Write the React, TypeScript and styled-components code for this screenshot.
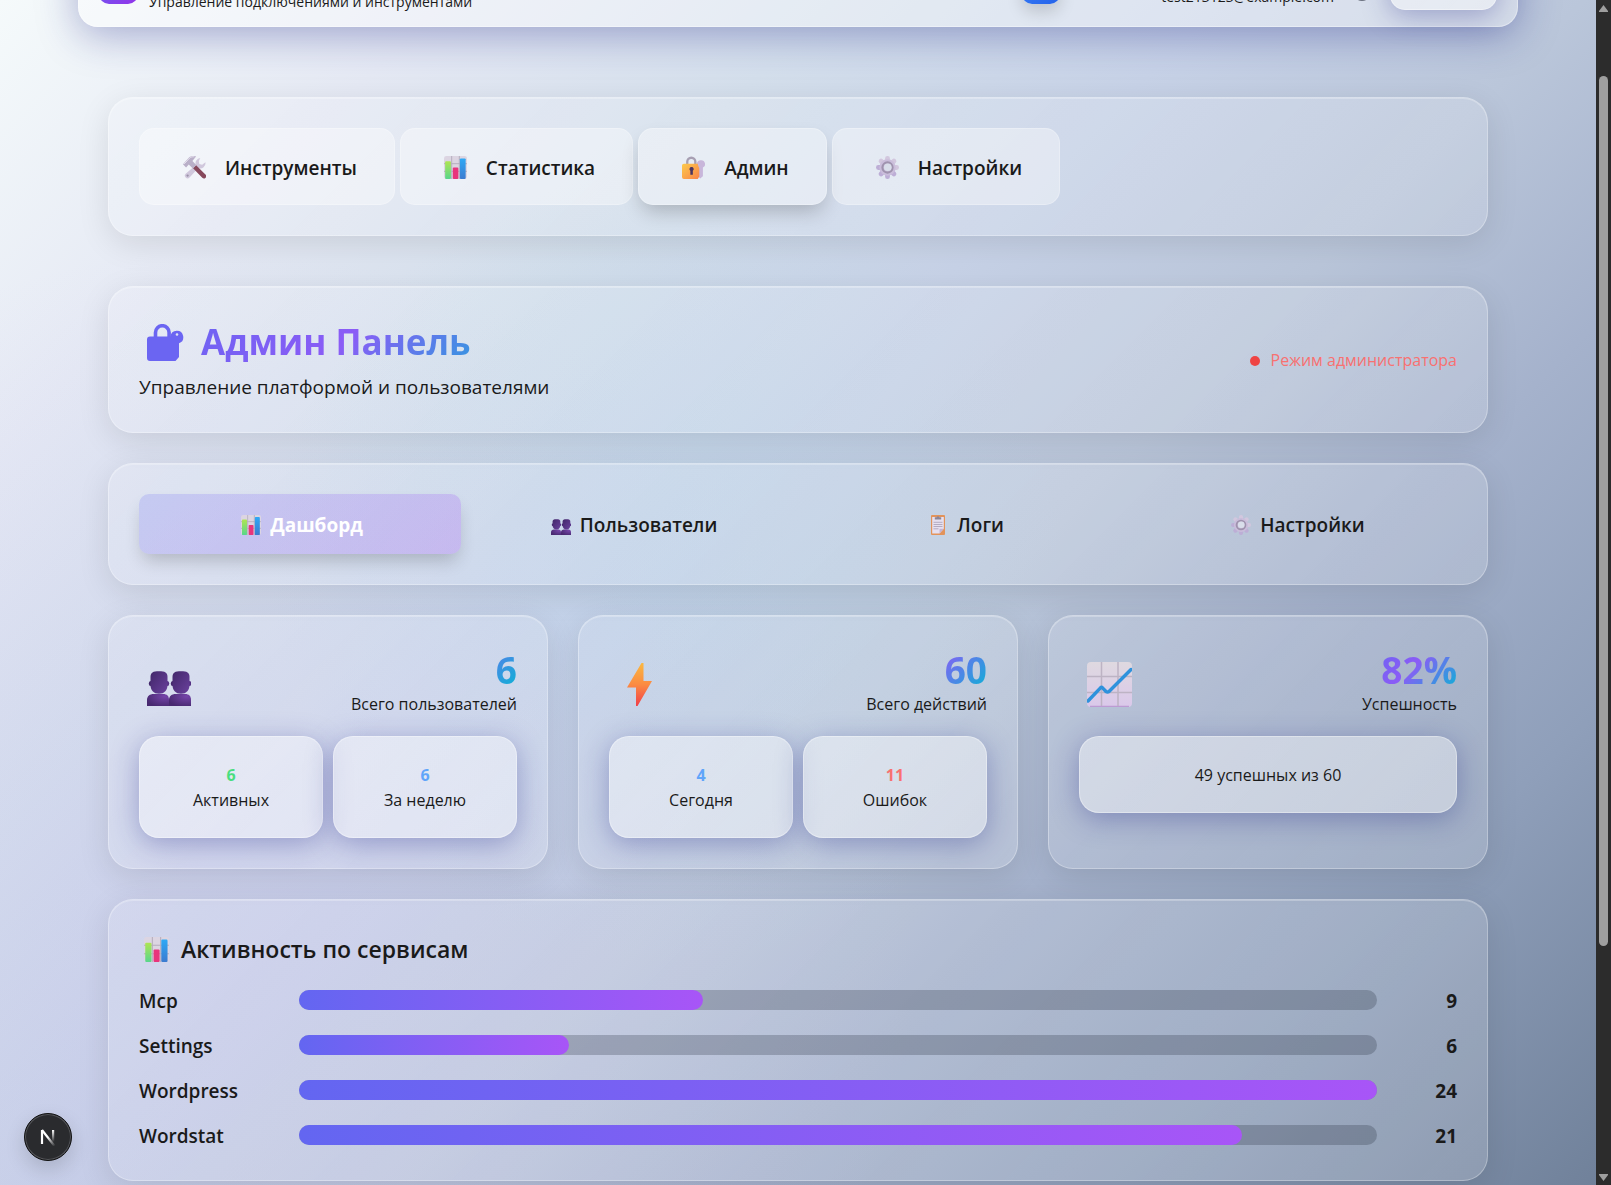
import React from "react";
import styled, { createGlobalStyle, css } from "styled-components";

const GlobalStyle = createGlobalStyle`
  *, *::before, *::after { box-sizing: border-box; }
  body {
    margin: 0;
    overflow: hidden;
    color: #1a1a1a;
    font-family: "Open Sans", "Noto Sans", sans-serif;
    font-size: 19px;
  }
  h1, h2, p { margin: 0; }
  button { font: inherit; color: inherit; cursor: pointer; }
`;

const brandText = css`
  background: linear-gradient(135deg, #6366f1 0%, #8b5cf6 50%, #06b6d4 100%);
  -webkit-background-clip: text;
  background-clip: text;
  color: transparent;
`;

const raised = css`
  border: 1px solid rgba(255, 255, 255, 0.35);
  background: linear-gradient(135deg, rgba(255, 255, 255, 0.4), rgba(255, 255, 255, 0.38));
  box-shadow: 0 6px 28px rgba(31, 38, 135, 0.34);
`;

const Screen = styled.div`
  display: flex;
  height: 100vh;
`;

const Page = styled.div`
  flex: 1;
  min-width: 0;
  overflow: hidden;
  background:
    radial-gradient(circle at 14% 80%, rgba(200, 190, 240, 0.3), rgba(200, 190, 240, 0) 42%),
    radial-gradient(circle at 42% 48%, rgba(180, 212, 232, 0.4), rgba(180, 212, 232, 0) 36%),
    linear-gradient(
      135deg,
      #f5fafb 0%,
      #e5e9f4 16%,
      #d4dfec 30%,
      #c7d2e7 44%,
      #bac6da 57%,
      #a5b2cc 69%,
      #8f9fba 83%,
      #70819a 100%
    );
`;

const Header = styled.header`
  display: flex;
  align-items: center;
  gap: 11px;
  max-width: 1440px;
  height: 86px;
  margin: -59px auto 70px;
  padding: 0 20px;
  border: 1px solid rgba(255, 255, 255, 0.35);
  border-radius: 20px;
  background: rgba(255, 255, 255, 0.38);
  box-shadow: 0 8px 40px rgba(31, 38, 135, 0.36);
`;

const Logo = styled.div`
  width: 39px;
  height: 40px;
  border-radius: 10px;
  background: linear-gradient(135deg, #6366f1, #9333ea);
`;

const HeaderText = styled.div<{ $height: number; $width?: number }>`
  display: flex;
  flex-direction: column;
  justify-content: flex-end;
  align-items: ${(p) => (p.$width ? "flex-end" : "flex-start")};
  height: ${(p) => p.$height}px;
  width: ${(p) => (p.$width ? `${p.$width}px` : "auto")};
  font-size: 14px;
  line-height: 20px;
`;

const HeaderActions = styled.div`
  display: flex;
  align-items: center;
  margin-left: auto;
`;

const BlueButton = styled.button`
  width: 38px;
  height: 40px;
  border: 0;
  border-radius: 10px;
  background: linear-gradient(135deg, #3b82f6, #2563eb);
  box-shadow: 0 8px 16px rgba(0, 0, 0, 0.15);
`;

const StatusRing = styled.span`
  width: 18px;
  height: 34px;
  margin: 0 19px 0 19px;
  border-radius: 9px;
  background: #6b7280;
`;

const GhostButton = styled.button`
  width: 107px;
  height: 52px;
  border-radius: 15px;
  ${raised}
`;

const Main = styled.main`
  display: flex;
  flex-direction: column;
  gap: 30px;
  max-width: 1380px;
  margin: 0 auto;
`;

const Panel = styled.section`
  padding: 30px;
  border: 1px solid rgba(255, 255, 255, 0.3);
  border-radius: 25px;
  background: linear-gradient(135deg, rgba(255, 255, 255, 0.12), rgba(255, 255, 255, 0.17));
  box-shadow: 0 8px 32px rgba(0, 0, 0, 0.1), inset 0 1px 0 rgba(255, 255, 255, 0.25);
`;

const MainNav = styled(Panel).attrs({ as: "nav" })`
  display: flex;
  gap: 5px;
  margin-bottom: 20px;
`;

const NavButton = styled.button<{ $active?: boolean }>`
  display: flex;
  align-items: center;
  gap: 19px;
  height: 77px;
  padding: 2px 37px 0 43px;
  border: 1px solid rgba(255, 255, 255, 0.25);
  border-radius: 15px;
  background: rgba(255, 255, 255, 0.38);
  font-weight: 600;
  box-shadow: ${(p) => (p.$active ? "0 10px 20px -4px rgba(0, 0, 0, 0.22)" : "none")};
`;

const TitlePanel = styled(Panel)`
  display: flex;
  justify-content: space-between;
  align-items: center;
`;

const Title = styled.h1`
  display: flex;
  align-items: center;
  gap: 17px;
  padding-left: 8px;
  margin-bottom: 6px;
  font-size: 35px;
  line-height: 50px;
  font-weight: 700;
  ${brandText}
`;

const Subtitle = styled.p`
  line-height: 29px;
`;

const Mode = styled.div`
  display: flex;
  align-items: center;
  gap: 11px;
  padding-top: 2px;
  color: #f87171;
  font-size: 16px;
  line-height: 25px;
`;

const Dot = styled.span`
  width: 10px;
  height: 10px;
  border-radius: 50%;
  background: #ef4444;
`;

const Tabs = styled(Panel).attrs({ as: "nav" })`
  display: grid;
  grid-template-columns: repeat(4, 1fr);
  gap: 10px;
`;

const Tab = styled.button<{ $active?: boolean }>`
  display: flex;
  align-items: center;
  justify-content: center;
  gap: 9px;
  height: 60px;
  padding: 2px 0 0 4px;
  border: 0;
  border-radius: 10px;
  background: ${(p) =>
    p.$active ? "linear-gradient(135deg, rgba(99, 102, 241, 0.2), rgba(168, 85, 247, 0.25))" : "transparent"};
  color: ${(p) => (p.$active ? "#fff" : "inherit")};
  font-weight: ${(p) => (p.$active ? 700 : 600)};
  box-shadow: ${(p) => (p.$active ? "0 10px 18px -4px rgba(0, 0, 0, 0.2)" : "none")};
`;

const Cards = styled.div`
  display: grid;
  grid-template-columns: repeat(3, 1fr);
  gap: 30px;
`;

const CardHead = styled.div`
  display: flex;
  justify-content: space-between;
  align-items: center;
  height: 70px;
  margin-bottom: 20px;
  padding: 2px 0 0 8px;
`;

const CardIcon = styled.div`
  display: grid;
  padding-top: 4px;
`;

const Figure = styled.div`
  text-align: right;
`;

const Big = styled.p`
  font-size: 37px;
  line-height: 45px;
  font-weight: 700;
  ${brandText}
`;

const Caption = styled.p`
  font-size: 16px;
  line-height: 25px;
`;

const Minis = styled.div`
  display: flex;
  gap: 10px;
`;

const Mini = styled.div`
  flex: 1;
  padding: 26px 25px 24px;
  border-radius: 20px;
  text-align: center;
  font-size: 16px;
  line-height: 25px;
  ${raised}
`;

const MiniValue = styled.p<{ $color: string }>`
  color: ${(p) => p.$color};
  font-weight: 700;
`;

const SectionTitle = styled.h2`
  display: flex;
  align-items: center;
  gap: 12px;
  margin-bottom: 17px;
  padding-left: 5px;
  font-size: 23px;
  line-height: 38px;
  font-weight: 600;
`;

const Rows = styled.div`
  display: flex;
  flex-direction: column;
  gap: 15px;
`;

const Row = styled.div`
  display: grid;
  grid-template-columns: 160px 1fr 80px;
  align-items: start;
  height: 30px;
  line-height: 32px;
  font-weight: 600;
`;

const Track = styled.div`
  height: 20px;
  margin-top: 5px;
  border-radius: 10px;
  background: rgba(31, 41, 55, 0.25);
`;

const Fill = styled.div`
  height: 100%;
  border-radius: 10px;
  background: linear-gradient(90deg, #6366f1, #a855f7);
`;

const Count = styled.span`
  text-align: right;
  font-weight: 700;
`;

const Scrollbar = styled.div`
  display: flex;
  flex-direction: column;
  align-items: center;
  width: 15px;
  padding: 5px 0 4px;
  background: #2c2c2c;
`;

const Arrow = styled.svg`
  width: 9px;
  height: 7px;
  fill: #9f9f9f;
`;

const ThumbLane = styled.div`
  display: flex;
  flex: 1;
  flex-direction: column;
  padding: 64px 0 228px;
`;

const Thumb = styled.div`
  flex: 1;
  width: 9px;
  border-radius: 5px;
  background: #9f9f9f;
`;

const DevBadge = styled.button`
  position: fixed;
  left: 24px;
  bottom: 24px;
  display: grid;
  place-items: center;
  width: 48px;
  height: 48px;
  padding: 0;
  border: 1px solid #111;
  border-radius: 50%;
  background: #2a2b2e;
  box-shadow: inset 0 0 0 1px #55565a, 0 8px 20px rgba(0, 0, 0, 0.15);
`;

type IconProps = { size: number };

const Tools = ({ size }: IconProps) => (
  <svg width={size} height={size} viewBox="0 0 24 24" aria-hidden="true">
    <path d="M18 2a5.500 5.500 0 0 0-4.600 7.400L2.800 18.400a2.800 2.800 0 1 0 4 4L16 12.600a5.500 5.500 0 0 0 7.400-6.100l-3.400 2.600-3-.8-.5-3z" fill="#d0c7dc" />
    <path d="M10.500 12.800l3.200-3.200 9.700 9.600a2.300 2.300 0 0 1-3.300 3.600z" fill="#87485c" />
    <path d="M0 8.700L5.800 2C8 .2 10.800-.4 13.600.6L9.800 5.200l4 4.300-3.500 3.600L6 8.900 3.200 12z" fill="#b9afc8" />
    <path d="M1.200 8.300l5.500-6C8.300.9 10 .6 12 .9" stroke="#e9e4f0" strokeWidth="1" fill="none" />
    <circle cx="4.800" cy="20.400" r="1.200" fill="#9990a8" />
  </svg>
);

const BarChart = ({ size }: IconProps) => (
  <svg width={size} height={size} viewBox="0 0 24 24" aria-hidden="true">
    <defs>
      <linearGradient id="barGreen" x2="0" y2="1"><stop stopColor="#aee552" /><stop offset="1" stopColor="#58d68c" /></linearGradient>
      <linearGradient id="barBlue" x2="0" y2="1"><stop stopColor="#2fa9f5" /><stop offset="1" stopColor="#3b7bd0" /></linearGradient>
    </defs>
    <rect width="24" height="24" rx="2.500" fill="#dcd5e2" />
    <path d="M0 8h24M0 16h24M8 0v24M16 0v24" stroke="#b5adbd" strokeWidth="1" />
    <rect x="1.200" y="5.500" width="6" height="18.500" rx="1" fill="url(#barGreen)" />
    <rect x="9.200" y="12" width="5.800" height="12" rx="1" fill="#e8357c" />
    <rect x="16.600" y="2.500" width="6" height="21.500" rx="1" fill="url(#barBlue)" />
  </svg>
);

const LockKey = ({ size }: IconProps) => (
  <svg width={size} height={size} viewBox="0 0 24 24" aria-hidden="true">
    <defs>
      <linearGradient id="lockBody" x2="1" y2="1"><stop stopColor="#fccb4b" /><stop offset="1" stopColor="#f9844a" /></linearGradient>
    </defs>
    <path d="M20 4.500a4 4 0 0 1 1.800 7.600V21L19 23.500l-1.500-1.500V12A4 4 0 0 1 20 4.500z" fill="#c8b6da" />
    <path d="M5.500 9V6a4.200 4.200 0 0 1 8.400 0v3" fill="none" stroke="#a79fb2" strokeWidth="2.400" />
    <path d="M2 8h14.500q.3 3 1.500 4.500v9L16.500 24H2a2 2 0 0 1-2-2V10a2 2 0 0 1 2-2z" fill="url(#lockBody)" />
    <path d="M10 11.500a2.200 2.200 0 0 1 1.300 4v4h-2.600v-4a2.200 2.200 0 0 1 1.300-4z" fill="#4b3561" />
  </svg>
);

const LockShape = ({ size }: IconProps) => (
  <svg width={size} height={size} viewBox="0 0 37 37" aria-hidden="true">
    <path d="M8.500 14V8.500a6.800 6.800 0 0 1 13.600 0V14" fill="none" stroke="#6b65f2" strokeWidth="3.600" />
    <path d="M3 12.500h20.500A6.400 6.400 0 1 1 32 19.300V33L28.500 37H3a3 3 0 0 1-3-3V15.500a3 3 0 0 1 3-3z" fill="#6b65f2" />
    <circle cx="30" cy="10.500" r="1.300" fill="#dfe4f1" />
  </svg>
);

const Gear = ({ size }: IconProps) => (
  <svg width={size} height={size} viewBox="0 0 24 24" aria-hidden="true">
    {[0, 45, 90, 135, 180, 225, 270, 315].map((a) => (
      <rect key={a} x="9.500" y="0" width="5" height="7" rx="2.400" fill={a > 90 && a < 315 ? "#bdaed6" : "#d2c7de"} transform={`rotate(${a} 12 12)`} />
    ))}
    <circle cx="12" cy="12" r="8.500" fill="#cabddb" />
    <circle cx="12" cy="12" r="5.300" fill="none" stroke="#9f93ae" strokeWidth="2.200" />
    <circle cx="12.300" cy="11.700" r="4" fill="#d9deea" />
  </svg>
);

const People = ({ size }: IconProps) => (
  <svg width={size} height={size} viewBox="0 -9 44 44" aria-hidden="true">
    <defs>
      <linearGradient id="head" x2="1" y2="1"><stop stopColor="#42276a" /><stop offset="1" stopColor="#6a419d" /></linearGradient>
      <radialGradient id="torso" cx="0.8" cy="0.2" r="0.9"><stop stopColor="#7545a9" /><stop offset="1" stopColor="#482970" /></radialGradient>
    </defs>
    {[22, 0].map((x) => (
      <g key={x} transform={`translate(${x} 0)`}>
        <ellipse cx="3.500" cy="12.500" rx="1.700" ry="2.600" fill="#42276a" />
        <ellipse cx="20.500" cy="12.500" rx="1.700" ry="2.600" fill="#553284" />
        <path d="M3.500 6C3.500 1.500 6 .3 12 .3S20.500 1.500 20.500 6v8c0 5-3 8.800-8.500 8.800S3.500 19 3.500 14z" fill="url(#head)" />
        <path d="M0 35v-6c0-4 3-6 6.500-6h9.500c4 0 6 2 6 6v6z" fill="url(#torso)" />
      </g>
    ))}
  </svg>
);

const Clipboard = ({ size }: IconProps) => (
  <svg width={size} height={size} viewBox="-3 0 20 20" aria-hidden="true">
    <rect width="14" height="20" rx="1" fill="#e2935a" />
    <path d="M1.200 2h11.600v11.800L8.500 18.500H1.200z" fill="#e6e0f0" />
    <path d="M8.500 18.500v-4.700h4.300z" fill="#c3b4d6" />
    <path d="M2.500 7.300h9M2.500 9.500h9M2.500 11.500h9M2.500 13.800h5" stroke="#a79db5" strokeWidth=".8" />
    <path d="M3.800 4.500V2.200H5.500a1.600 1.600 0 0 1 3 0h1.700v2.300z" fill="#8d8595" />
  </svg>
);

const Bolt = () => (
  <svg width="45" height="45" viewBox="-10 -1 45 45" aria-hidden="true">
    <defs><linearGradient id="bolt" x2="0" y2="1"><stop stopColor="#fbb840" /><stop offset=".5" stopColor="#fb8b43" /><stop offset="1" stopColor="#f13f49" /></linearGradient></defs>
    <path d="M14.500 0h2v18H25L10.500 43H9V24.500H0z" fill="url(#bolt)" />
  </svg>
);

const LineChart = () => (
  <svg width="45" height="45" viewBox="0 0 45 45" aria-hidden="true">
    <defs><linearGradient id="paper" x2="0" y2="1"><stop stopColor="#dfd9e0" /><stop offset="1" stopColor="#dac8ea" /></linearGradient></defs>
    <rect width="45" height="45" rx="4" fill="url(#paper)" />
    <path d="M0 14.500h45M0 30.500h45M14.500 0v45M31 0v45" stroke="#bdb3c4" strokeWidth="1.500" />
    <path d="M3 44.300h39" stroke="#bd9bd3" strokeWidth="1.300" />
    <path d="M1 39L13.500 25.800q1-1 2 0L19 29.500q1.500 1 3 0L44 7.500" fill="none" stroke="#2f92dc" strokeWidth="3.400" strokeLinecap="round" strokeLinejoin="round" />
  </svg>
);

const services = [
  { name: "Mcp", count: 9 },
  { name: "Settings", count: 6 },
  { name: "Wordpress", count: 24 },
  { name: "Wordstat", count: 21 },
];
const peak = Math.max(...services.map((s) => s.count));

export default function App() {
  return (
    <Screen>
      <GlobalStyle />
      <Page>
        <Header>
          <Logo />
          <HeaderText $height={56}>
            <span>Управление подключениями и инструментами</span>
          </HeaderText>
          <HeaderActions>
            <BlueButton aria-label="Подключения" />
            <HeaderText $height={46} $width={274}>
              <span>test213123@example.com</span>
            </HeaderText>
            <StatusRing />
            <GhostButton aria-label="Выйти" />
          </HeaderActions>
        </Header>

        <Main>
          <MainNav>
            <NavButton><Tools size={23} />Инструменты</NavButton>
            <NavButton><BarChart size={23} />Статистика</NavButton>
            <NavButton $active><LockKey size={23} />Админ</NavButton>
            <NavButton><Gear size={23} />Настройки</NavButton>
          </MainNav>

          <TitlePanel>
            <div>
              <Title><LockShape size={37} />Админ Панель</Title>
              <Subtitle>Управление платформой и пользователями</Subtitle>
            </div>
            <Mode><Dot />Режим администратора</Mode>
          </TitlePanel>

          <Tabs>
            <Tab $active><BarChart size={20} />Дашборд</Tab>
            <Tab><People size={20} />Пользователи</Tab>
            <Tab><Clipboard size={20} />Логи</Tab>
            <Tab><Gear size={20} />Настройки</Tab>
          </Tabs>

          <Cards>
            <Panel>
              <CardHead>
                <CardIcon><People size={44} /></CardIcon>
                <Figure><Big>6</Big><Caption>Всего пользователей</Caption></Figure>
              </CardHead>
              <Minis>
                <Mini><MiniValue $color="#4ade80">6</MiniValue><p>Активных</p></Mini>
                <Mini><MiniValue $color="#60a5fa">6</MiniValue><p>За неделю</p></Mini>
              </Minis>
            </Panel>
            <Panel>
              <CardHead>
                <CardIcon><Bolt /></CardIcon>
                <Figure><Big>60</Big><Caption>Всего действий</Caption></Figure>
              </CardHead>
              <Minis>
                <Mini><MiniValue $color="#60a5fa">4</MiniValue><p>Сегодня</p></Mini>
                <Mini><MiniValue $color="#f87171">11</MiniValue><p>Ошибок</p></Mini>
              </Minis>
            </Panel>
            <Panel>
              <CardHead>
                <CardIcon><LineChart /></CardIcon>
                <Figure><Big>82%</Big><Caption>Успешность</Caption></Figure>
              </CardHead>
              <Minis>
                <Mini><p>49 успешных из 60</p></Mini>
              </Minis>
            </Panel>
          </Cards>

          <Panel>
            <SectionTitle><BarChart size={25} />Активность по сервисам</SectionTitle>
            <Rows>
              {services.map((s) => (
                <Row key={s.name}>
                  <span>{s.name}</span>
                  <Track><Fill style={{ width: `${(s.count / peak) * 100}%` }} /></Track>
                  <Count>{s.count}</Count>
                </Row>
              ))}
            </Rows>
          </Panel>
        </Main>
      </Page>

      <Scrollbar aria-hidden="true">
        <Arrow viewBox="0 0 9 7"><path d="M4.500 0L9 6v1H0V6z" /></Arrow>
        <ThumbLane><Thumb /></ThumbLane>
        <Arrow viewBox="0 0 9 7"><path d="M4.500 7L9 1V0H0v1z" /></Arrow>
      </Scrollbar>

      <DevBadge aria-label="Next.js">
        <svg width="18" height="18" viewBox="0 0 18 18" aria-hidden="true">
          <defs>
            <linearGradient id="fade" x2="0" y2="1"><stop stopColor="#fff" /><stop offset="1" stopColor="#fff" stopOpacity="0" /></linearGradient>
            <linearGradient id="tail" gradientUnits="userSpaceOnUse" x1="9" y1="9" x2="16" y2="18"><stop stopColor="#fff" /><stop offset="1" stopColor="#fff" stopOpacity="0" /></linearGradient>
          </defs>
          <path d="M3 16V2" stroke="#fff" strokeWidth="2.200" />
          <path d="M3 2L15.500 18" stroke="url(#tail)" strokeWidth="2.200" />
          <rect x="13" y="2" width="2.200" height="12" fill="url(#fade)" />
        </svg>
      </DevBadge>
    </Screen>
  );
}
